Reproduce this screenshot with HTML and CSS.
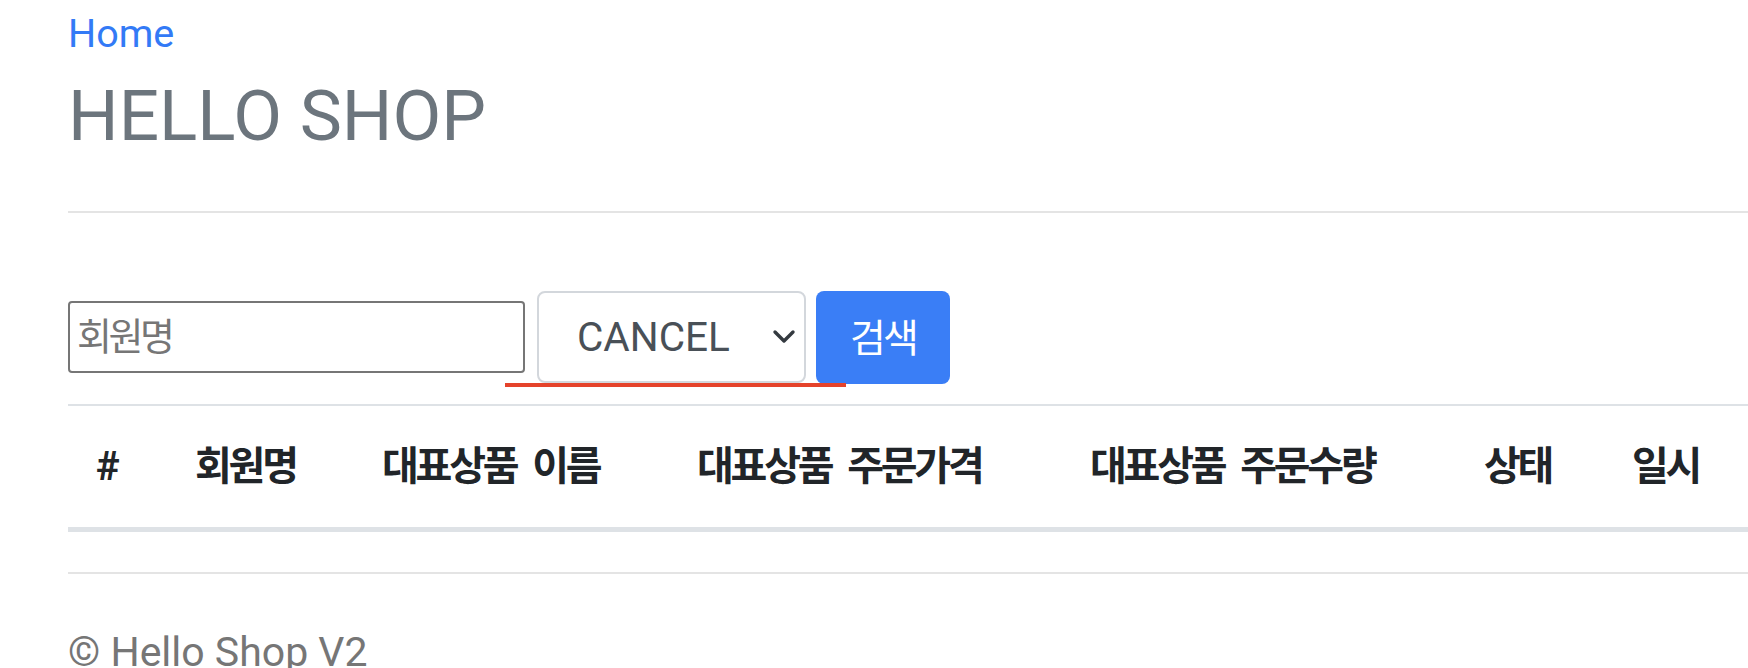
FILE: index.html
```html
<!DOCTYPE html>
<html lang="ko">
<head>
<meta charset="utf-8">
<title>HELLO SHOP</title>
<link rel="stylesheet" href="styles.css">
</head>
<body>
<div class="container">
  <nav class="nav"><a class="home" href="#">Home</a></nav>
  <h1 class="title">HELLO SHOP</h1>
  <hr class="rule">
  <form class="search">
    <input class="name-input" type="text" placeholder="회원명">
    <span class="select-wrap">
      <select class="status-select">
        <option>CANCEL</option>
      </select>
      <svg class="chevron" width="24" height="16" viewBox="0 0 24 16"><path d="M3 3 L12 12 L21 3" fill="none" stroke="#343a40" stroke-width="3.4" stroke-linecap="round" stroke-linejoin="round"/></svg>
    </span>
    <button class="search-btn" type="button">검색</button>
    <span class="red-mark"></span>
  </form>
  <table class="orders">
    <colgroup>
      <col class="c1"><col class="c2"><col class="c3"><col class="c4"><col class="c5"><col class="c6"><col class="c7">
    </colgroup>
    <thead>
      <tr>
        <th>#</th>
        <th>회원명</th>
        <th>대표상품 이름</th>
        <th>대표상품 주문가격</th>
        <th>대표상품 주문수량</th>
        <th>상태</th>
        <th>일시</th>
      </tr>
    </thead>
    <tbody></tbody>
  </table>
  <footer class="footer">
    <hr class="rule foot-rule">
    <p class="copy">© Hello Shop V2</p>
  </footer>
</div>
</body>
</html>
```

FILE: styles.css
```css
html, body {
  margin: 0;
  padding: 0;
  background: #ffffff;
  overflow: hidden;
}
body {
  font-family: Roboto, "Noto Sans CJK KR", sans-serif;
  color: #212529;
}
.container {
  padding-left: 68px;
}
.nav {
  padding-top: 11px;
  height: 46px;
}
.home {
  font-size: 39.5px;
  line-height: 46px;
  color: #337af6;
  text-decoration: none;
}
.title {
  margin: 17px 0 0 0;
  font-size: 71px;
  line-height: 84px;
  font-weight: 400;
  color: #6c757d;
}
.rule {
  margin: 53px 0 0 0;
  border: 0;
  height: 2px;
  background: #e4e4e4;
}
.search {
  position: relative;
  display: flex;
  align-items: center;
  margin-top: 78px;
  height: 92px;
}
.name-input {
  box-sizing: border-box;
  width: 457px;
  height: 72px;
  border: 2px solid #767676;
  border-radius: 4px;
  padding: 0 7px;
  font-family: Roboto, "Noto Sans CJK KR", sans-serif;
  font-size: 38px;
  letter-spacing: -3.5px;
  color: #212529;
  outline: none;
}
.name-input::placeholder {
  color: #767676;
}
.select-wrap {
  position: relative;
  margin-left: 12px;
  display: block;
}
.status-select {
  display: block;
  box-sizing: border-box;
  width: 269px;
  height: 92px;
  border: 2px solid #d3d7dc;
  border-radius: 8px;
  padding: 0 0 0 38px;
  background: #fff;
  font-family: Roboto, sans-serif;
  font-size: 40.5px;
  color: #495057;
  -webkit-appearance: none;
  appearance: none;
  outline: none;
}
.chevron {
  position: absolute;
  left: 235px;
  top: 38px;
  pointer-events: none;
}
.search-btn {
  box-sizing: border-box;
  margin-left: 10px;
  width: 134px;
  height: 93px;
  border: 0;
  border-radius: 8px;
  background: #3a7ef6;
  color: #ffffff;
  font-family: Roboto, "Noto Sans CJK KR", sans-serif;
  font-size: 39px;
  letter-spacing: -3px;
  padding: 0 0 4px 0;
}
.red-mark {
  position: absolute;
  left: 437px;
  top: 92px;
  width: 341px;
  height: 4px;
  background: #e5432b;
}
.orders {
  margin-top: 21px;
  width: 1680px;
  table-layout: fixed;
  border-collapse: collapse;
}
.c1 { width: 99px; }
.c2 { width: 187px; }
.c3 { width: 315px; }
.c4 { width: 393px; }
.c5 { width: 394px; }
.c6 { width: 148px; }
.c7 { width: 144px; }
.orders th {
  height: 121px;
  padding: 0 0 0 28px;
  text-align: left;
  vertical-align: middle;
  font-size: 40px;
  line-height: 1;
  font-weight: 700;
  letter-spacing: -3.2px;
  word-spacing: 9px;
  white-space: nowrap;
  color: #212529;
  border-top: 2px solid #dee2e6;
  border-bottom: 5px solid #dee2e6;
}
.footer {
  margin-top: 40px;
}
.foot-rule {
  margin: 0;
}
.copy {
  margin: 54px 0 0 0;
  font-size: 41px;
  line-height: 48px;
  color: #767676;
}
```
